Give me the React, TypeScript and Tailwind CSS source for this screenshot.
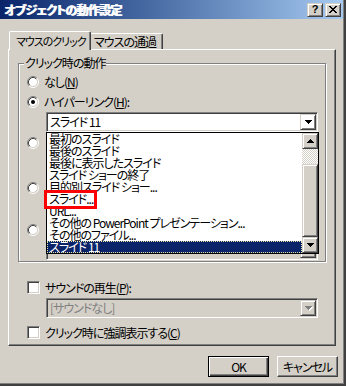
import type { ReactNode } from "react";

const raised =
  "border border-t-[#d4d0c8] border-l-[#d4d0c8] border-r-[#404040] border-b-[#404040] shadow-[inset_1px_1px_#ffffff,inset_-1px_-1px_#808080]";
const sunken =
  "border border-t-[#808080] border-l-[#808080] border-r-white border-b-white shadow-[inset_1px_1px_#404040,inset_-1px_-1px_#d4d0c8]";

const Arrow = ({ up = false, gray = false }: { up?: boolean; gray?: boolean }) => (
  <svg width="8" height="5" viewBox="0 0 8 5" className="shrink-0">
    {gray && (
      <path
        d="M1 1h7v1H1zM2 2h5v1H2zM3 3h3v1H3zM4 4h1v1H4z"
        fill="#ffffff"
      />
    )}
    <path
      d={up ? "M3 0h1v1H3zM2 1h3v1H2zM1 2h5v1H1zM0 3h7v1H0z" : "M0 0h7v1H0zM1 1h5v1H1zM2 2h3v1H2zM3 3h1v1H3z"}
      fill={gray ? "#808080" : "#000000"}
    />
  </svg>
);

const Radio = ({ checked = false }: { checked?: boolean }) => (
  <svg width="12" height="12" viewBox="0 0 12 12" className="shrink-0">
    <circle cx="6" cy="6" r="4.5" fill="#ffffff" />
    <path d="M2.11 9.89A5.5 5.5 0 0 1 9.89 2.11" stroke="#808080" fill="none" />
    <path d="M9.89 2.11A5.5 5.5 0 0 1 2.11 9.89" stroke="#ffffff" fill="none" />
    <path d="M2.82 9.18A4.5 4.5 0 0 1 9.18 2.82" stroke="#404040" fill="none" />
    <path d="M9.18 2.82A4.5 4.5 0 0 1 2.82 9.18" stroke="#d4d0c8" fill="none" />
    {checked && <circle cx="6" cy="6" r="2" fill="#000000" />}
  </svg>
);

const RadioRow = ({ checked, className, children }: { checked?: boolean; className: string; children?: ReactNode }) => (
  <div className={`flex h-[12px] items-center gap-[5px] whitespace-nowrap ${className}`}>
    <Radio checked={checked} />
    {children && <span>{children}</span>}
  </div>
);

const CheckRow = ({ className, children }: { className: string; children: ReactNode }) => (
  <div className={`ml-[9px] flex h-[13px] items-center gap-[5px] whitespace-nowrap ${className}`}>
    <div className={`h-[13px] w-[13px] shrink-0 bg-white ${sunken}`} />
    <span>{children}</span>
  </div>
);

const Combo = ({ text, disabled = false, className }: { text: string; disabled?: boolean; className: string }) => (
  <div
    className={`flex h-[20px] w-[272px] items-center pl-[2px] pr-[1px] ${sunken} ${
      disabled ? "bg-[#d4d0c8] text-[#808080]" : "bg-white"
    } ${className}`}
  >
    <span className="flex-1 whitespace-nowrap pl-[1px]">{text}</span>
    <div className={`flex h-[16px] w-[16px] items-center justify-center pl-[1px] ${raised}`}>
      <Arrow gray={disabled} />
    </div>
  </div>
);

const items = [
  "最初のスライド",
  "最後のスライド",
  "最後に表示したスライド",
  "スライド ショーの終了",
  "目的別スライド ショー...",
  "スライド...",
  "URL...",
  "その他の PowerPoint プレゼンテーション...",
  "その他のファイル...",
];

export default function App() {
  return (
    <div className="relative h-[386px] w-[346px] overflow-hidden bg-[#d4d0c8] font-['Noto_Sans_CJK_JP','Noto_Sans_CJK_SC',sans-serif] text-[12px] leading-[12px] tracking-[-1px] text-black [font-feature-settings:'palt']">
      <div className="flex h-[386px] w-[346px] flex-col border-r-2 border-b-2 border-[#404040] shadow-[inset_-1px_-1px_#808080]">
        {/* title bar */}
        <div className="mr-[1px] flex h-[19px] items-center bg-linear-to-r from-[#0a246a] to-[#a6caf0] pl-[4px] pr-[2px]">
          <span className="flex-1 whitespace-nowrap text-[12px] font-bold leading-[19px] tracking-[-0.75px] text-white [text-shadow:1px_0_#ffffff]">
            オブジェクトの動作設定
          </span>
          <div className="flex gap-[2px]">
            <div className={`flex h-[14px] w-[16px] items-center justify-center bg-[#d4d0c8] ${raised}`}>
              <span className="font-['Liberation_Sans',sans-serif] text-[11px] font-bold leading-[11px] tracking-normal">?</span>
            </div>
            <div className={`flex h-[14px] w-[16px] items-center justify-center bg-[#d4d0c8] ${raised}`}>
              <svg width="8" height="7" viewBox="0 0 8 7">
                <path
                  d="M0 0h2v1H0zM6 0h2v1H6zM1 1h2v1H1zM5 1h2v1H5zM2 2h4v1H2zM3 3h2v1H3zM2 4h4v1H2zM1 5h2v1H1zM5 5h2v1H5zM0 6h2v1H0zM6 6h2v1H6z"
                  fill="#000000"
                />
              </svg>
            </div>
          </div>
        </div>

        {/* tabs */}
        <div className="relative z-10 -mb-[1px] mt-[12px] flex h-[19px] items-end pl-[9px]">
          <div className="flex h-[19px] w-[82px] items-center rounded-t-[2px] border-t border-l border-r border-t-white border-l-white border-r-[#404040] bg-[#d4d0c8] pl-[6px] text-[11px] shadow-[inset_-1px_0_#808080] whitespace-nowrap">
            マウスのクリック
          </div>
          <div className="mb-[1px] flex h-[16px] w-[72px] items-center rounded-tr-[2px] border-t border-r border-t-white border-r-[#404040] pl-[3px] shadow-[inset_-1px_0_#808080] whitespace-nowrap">
            マウスの通過
          </div>
        </div>

        {/* panel */}
        <div className="ml-[8px] flex h-[297px] w-[328px] flex-col border border-t-white border-l-white border-r-[#404040] border-b-[#404040] pl-[9px] pt-[13px] shadow-[inset_-1px_-1px_#808080]">
          <div className="relative flex h-[199px] w-[308px] flex-col border border-[#808080] pl-[8px] shadow-[inset_1px_1px_#ffffff,1px_1px_#ffffff]">
            <span className="absolute -top-[7px] left-[5px] bg-[#d4d0c8] px-[1px] whitespace-nowrap">
              クリック時の動作
            </span>
            <RadioRow className="mt-[12px]">
              なし(<span className="underline">N</span>)
            </RadioRow>
            <RadioRow checked className="mt-[8px]">
              ハイパーリンク(<span className="underline">H</span>):
            </RadioRow>
            <Combo text="スライド 11" className="ml-[19px] mt-[4px]" />
            <RadioRow className="mt-[5px]" />
            <RadioRow className="mt-[33px]" />
            <RadioRow className="mt-[30px]" />
            <Combo text="" disabled className="ml-[19px] mt-[4px]" />
          </div>

          <CheckRow className="mt-[19px]">
            サウンドの再生(<span className="underline">P</span>):
          </CheckRow>
          <Combo text="[サウンドなし]" disabled className="ml-[28px] mt-[4px]" />
          <CheckRow className="mt-[8px]">
            クリック時に強調表示する(<span className="underline">C</span>)
          </CheckRow>
        </div>

        {/* buttons */}
        <div className="mt-[10px] flex justify-end gap-[8px] pr-[6px]">
          <button className="flex h-[21px] w-[61px] items-center justify-center border border-black shadow-[inset_1px_1px_#ffffff,inset_-1px_-1px_#404040,inset_-2px_-2px_#808080]">
            OK
          </button>
          <button className="flex h-[21px] w-[61px] items-center justify-center border border-t-white border-l-white border-r-[#404040] border-b-[#404040] shadow-[inset_-1px_-1px_#808080]">
            キャンセル
          </button>
        </div>
      </div>

      {/* open dropdown list */}
      <div className="absolute left-[46px] top-[132px] flex h-[122px] w-[273px] border border-black bg-white">
        <div className="flex w-[255px] flex-col">
          {items.map((item) => (
            <div key={item} className="h-[12px] whitespace-nowrap pl-[2px] leading-[12px]">
              {item}
            </div>
          ))}
          <div className="h-[12px] whitespace-nowrap border border-dotted border-[#e8e4a8] bg-[#0a246a] pl-[1px] leading-[10px] text-white">
            スライド 11
          </div>
        </div>
        <div className="flex w-[16px] flex-col">
          <div className={`flex h-[16px] items-center justify-center pl-[1px] bg-[#d4d0c8] ${raised}`}>
            <Arrow up />
          </div>
          <div className="h-[15px] bg-[repeating-conic-gradient(#d4d0c8_0%_25%,#ffffff_0%_50%)] bg-[length:2px_2px]" />
          <div className={`h-[73px] bg-[#d4d0c8] ${raised}`} />
          <div className={`flex h-[16px] items-center justify-center pl-[1px] bg-[#d4d0c8] ${raised}`}>
            <Arrow />
          </div>
        </div>
      </div>

      {/* highlight */}
      <div className="absolute left-[44px] top-[190px] h-[19px] w-[53px] border-[3px] border-[#ff0000]" />
    </div>
  );
}
